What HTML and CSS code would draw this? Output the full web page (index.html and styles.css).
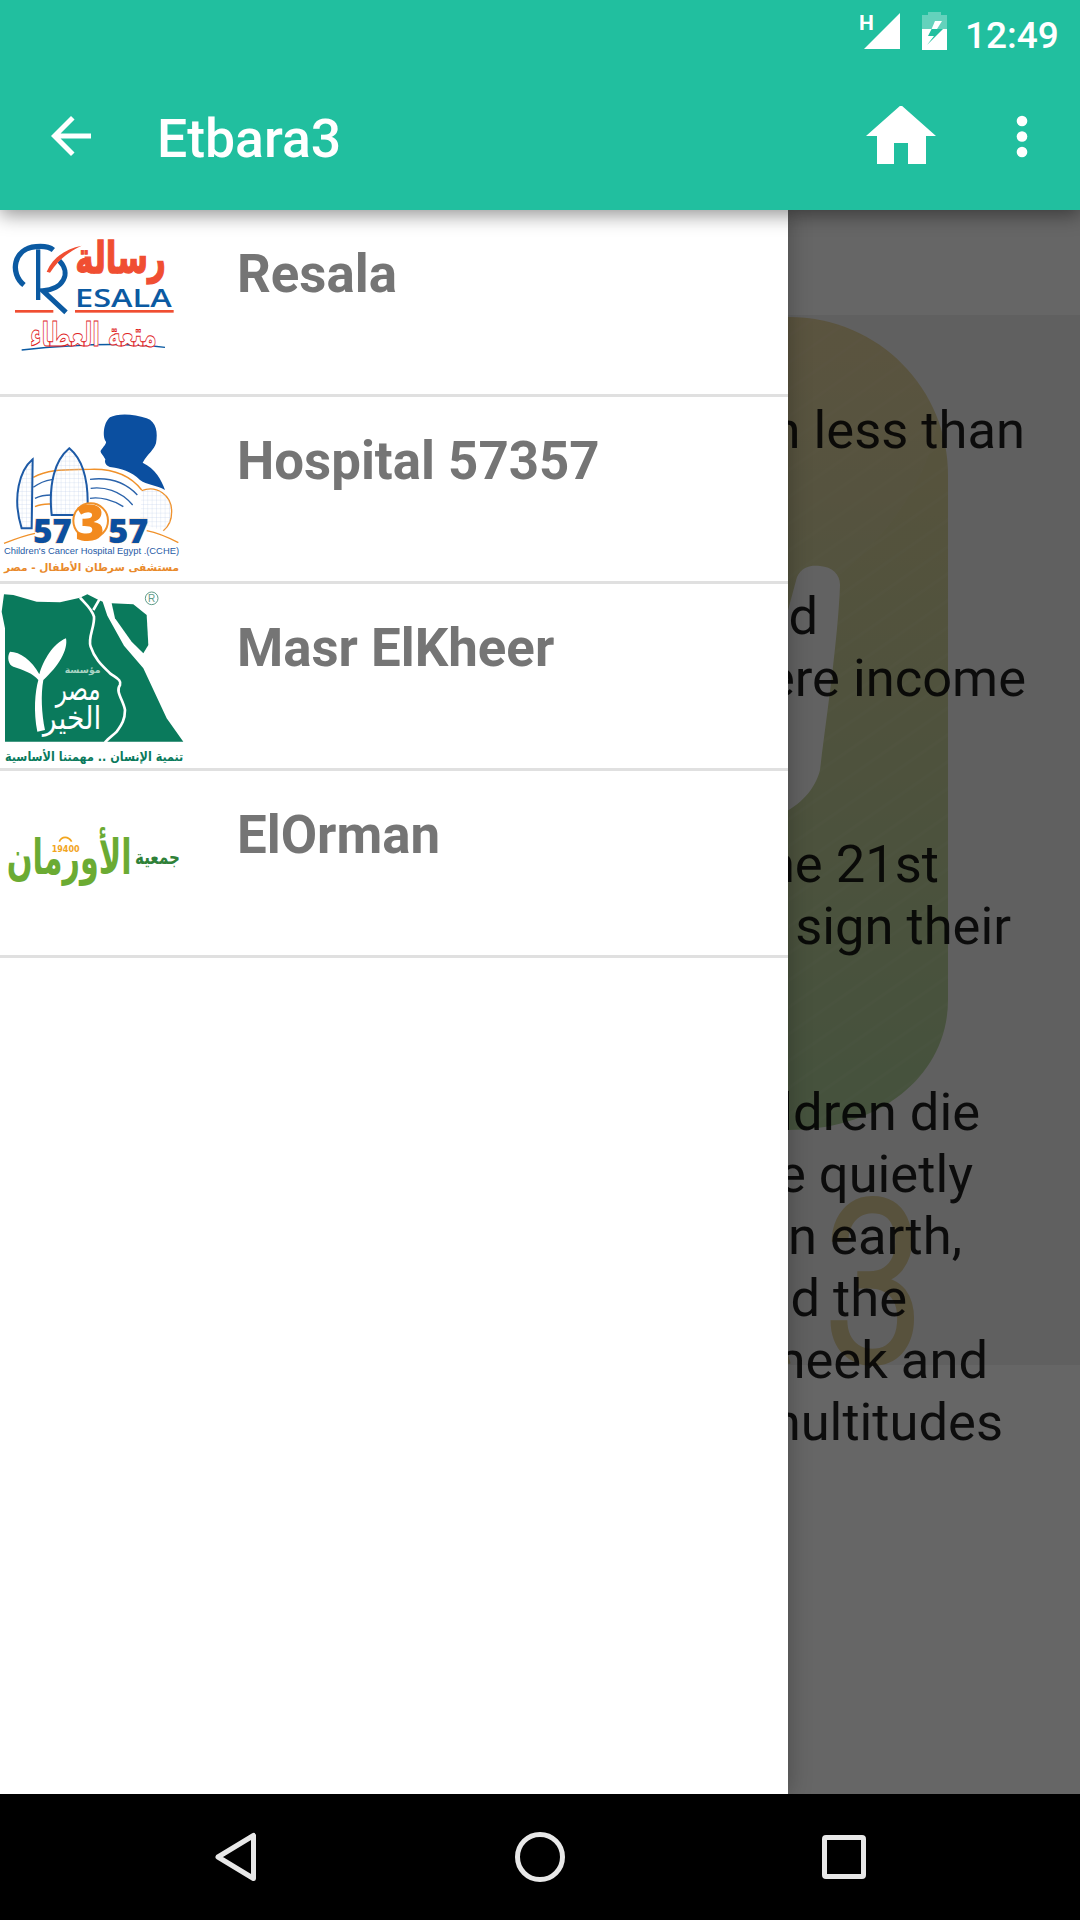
FILE: index.html
```html
<!DOCTYPE html>
<html lang="en">
<head>
<meta charset="utf-8">
<title>Etbara3</title>
<link rel="stylesheet" href="styles.css">
</head>
<body>
<div class="screen">
  <header class="appbar">
    <div class="statusbar">
      <svg class="status-icons" viewBox="860 0 90 72" width="90" height="72">
        <text class="net" x="859" y="30">H</text>
        <polygon class="w" points="864,49 900,13 900,49"/>
        <path class="w dim" d="M928 12h13v3h6v14h-25v-14h6z"/>
        <path class="w" d="M922 29h25v21h-25z"/>
        <polygon class="bolt" points="931.600,29 928,36 934,36 927,45 943,29"/>
        <polygon class="w" points="935,21 931.600,29 937,29 942,21"/>
      </svg>
      <span class="clock">12:49</span>
    </div>
    <div class="toolbar">
      <svg class="back" viewBox="0 0 24 24" width="60" height="60"><path class="w" d="M20 11H7.83l5.59-5.59L12 4l-8 8 8 8 1.41-1.41L7.83 13H20v-2z"/></svg>
      <h1 class="title">Etbara3</h1>
      <svg class="home" viewBox="866 106 70 60" width="70" height="60"><path class="w" d="M901 105L936 136H926V164H908V143H894V164H877V136H866Z"/></svg>
      <svg class="more" viewBox="1016 106 12 60" width="12" height="60"><circle class="w" cx="1022" cy="121" r="5.3"/><circle class="w" cx="1022" cy="136.500" r="5.300"/><circle class="w" cx="1022" cy="152" r="5.300"/></svg>
    </div>
  </header>

  <main class="main">
    <svg class="backdrop" viewBox="0 210 1080 1584" width="1080" height="1584">
      <defs>
        <linearGradient id="gold" x1="0" y1="0" x2="0" y2="1">
          <stop offset="0" stop-color="#e2d09a"/>
          <stop offset="0.45" stop-color="#c8ce98"/>
          <stop offset="1" stop-color="#acce98"/>
        </linearGradient>
        <pattern id="rays" width="22" height="22" patternUnits="userSpaceOnUse" patternTransform="rotate(-35)">
          <rect class="ray" width="22" height="3"/>
        </pattern>
      </defs>
      <rect class="photo" x="0" y="315" width="1080" height="1050"/>
      <path class="pill" d="M500 317H788C880 317 948 390 948 475V1000C948 1075 880 1130 788 1130H500Z"/>
      <path class="rays" d="M500 317H788C880 317 948 390 948 475V1000C948 1075 880 1130 788 1130H500Z"/>
      <path class="sheen" d="M788 317C860 317 925 370 938 420C925 500 860 570 788 610Z"/>
      <path class="notch" d="M797 577C802 566 812 565 820 566C832 567 840 574 840 585C838 640 826 720 820 770C815 790 800 805 780 815V640Z"/>
      <text class="mark" x="803" y="1364" text-anchor="end">a</text>
      <text class="mark" x="822" y="1364" textLength="104" lengthAdjust="spacingAndGlyphs">3</text>
    </svg>
    <div class="article">
      <div class="line e1024">population live on less than</div>
      <div class="line plain">$2.50 a day.</div>
      <div class="line plain">&nbsp;</div>
      <div class="line e818">More than 80% of the world</div>
      <div class="line e1026">lives in countries where income</div>
      <div class="line plain">differentials are widening.</div>
      <div class="line plain">&nbsp;</div>
      <div class="line e939">Nearly a billion entered the 21st</div>
      <div class="line e1010">unable to read a book or sign their</div>
      <div class="line plain">names.</div>
      <div class="line plain">&nbsp;</div>
      <div class="line e980">Every day 22,000 children die</div>
      <div class="line e973">due to poverty. They die quietly</div>
      <div class="line e961">in the poorest villages on earth,</div>
      <div class="line e907">far removed from scrutiny and the</div>
      <div class="line e987">the world. Being meek and</div>
      <div class="line e1000">in life makes these dying multitudes</div>
      <div class="line plain">even more invisible.</div>
    </div>
    <div class="scrim"></div>

    <nav class="drawer">
      <a class="row">
        <svg class="logo" viewBox="0 -60 570 552" width="190" height="184">
          <path class="s-blue" d="M72 165C28 130 40 55 108 50C130 48 150 52 160 60"/>
          <rect class="f-blue" x="108" y="58" width="13" height="152"/>
          <path class="s-blue thick" d="M178 92C215 130 190 178 128 182L198 247"/>
          <path class="f-red" d="M140 125C160 80 200 55 245 47C205 65 175 90 150 128Z"/>
          <text class="ar-bold f-red thicken" x="498" y="128" font-size="132" direction="rtl" textLength="272" lengthAdjust="spacingAndGlyphs">رسالة</text>
          <text class="latin f-blue" x="225" y="232" font-size="78" textLength="290" lengthAdjust="spacingAndGlyphs">ESALA</text>
          <rect class="f-red" x="45" y="240" width="115" height="8"/>
          <rect class="f-red" x="225" y="240" width="296" height="8"/>
          <path class="s-blue hair" d="M65 360C200 345 350 335 495 352"/>
          <text class="ar-outline" x="470" y="348" font-size="100" direction="rtl" textLength="380" lengthAdjust="spacingAndGlyphs">متعة العطاء</text>
        </svg>
        <span class="label">Resala</span>
      </a>
      <a class="row">
        <svg class="logo" viewBox="0 -9 570 552" width="190" height="184">
          <defs>
            <pattern id="grid" width="13" height="13" patternUnits="userSpaceOnUse"><path class="grid" d="M13 0H0V13"/></pattern>
          </defs>
          <path class="s-orange" d="M425 272C470 255 515 285 515 335C515 360 505 380 490 392"/>
          <path class="f-gridded" d="M425 272C470 255 515 285 515 335C515 360 505 380 490 392L420 370Z"/>
          <path class="f-hosp" d="M330 52C350 40 400 40 440 55C470 65 474 100 468 130C462 150 445 160 428 188C465 205 485 240 495 270C470 255 440 255 420 240C395 215 360 205 335 202C320 200 312 190 316 178C310 165 300 158 302 152C310 140 320 130 318 125C308 115 308 70 330 52Z"/>
          <path class="s-orange" d="M100 232C150 205 200 210 270 208C340 205 390 225 425 270"/>
          <path class="s-hblue" d="M100 262C130 240 150 240 160 238M270 238C320 232 370 240 412 285M105 295C125 285 145 285 155 285M272 265C310 260 360 270 398 315M270 295C300 290 340 300 370 320"/>
          <path class="s-orange" d="M105 320C125 310 145 312 155 312"/>
          <path class="sail" d="M98 178C60 210 35 290 65 385H95Z"/>
          <path class="sail" d="M208 145C165 180 145 250 155 345H262C268 250 250 180 208 145Z"/>
          <circle class="ring" cx="272" cy="362" r="52"/>
          <path class="s-orange" d="M12 430C50 415 80 405 105 400M440 392C480 400 510 415 535 428"/>
          <text class="num" x="100" y="428" font-size="100" textLength="115" lengthAdjust="spacingAndGlyphs">57</text>
          <text class="num3" x="226" y="422" font-size="150">3</text>
          <text class="num" x="325" y="428" font-size="100" textLength="120" lengthAdjust="spacingAndGlyphs">57</text>
          <text class="latin2 f-hblue" x="12" y="463" font-size="29" textLength="525" lengthAdjust="spacingAndGlyphs">Children's Cancer Hospital Egypt .(CCHE)</text>
          <text class="ar-bold f-orange" x="537" y="512" font-size="32" direction="rtl" textLength="525" lengthAdjust="spacingAndGlyphs">مستشفى سرطان الأطفال - مصر</text>
        </svg>
        <span class="label">Hospital 57357</span>
      </a>
      <a class="row">
        <svg class="logo" viewBox="0 -3 570 552" width="190" height="184">
          <path class="f-green" d="M12 28L40 30L110 50L180 52L240 38L262 28L290 42L308 50L322 92L372 182L430 250L500 400L550 470H15V130L5 80Z"/>
          <path class="f-green" d="M335 55L400 58L440 90L445 180L430 205L395 170L345 100Z"/>
          <path class="s-white" d="M240 38C255 55 275 70 282 95C285 125 262 160 272 185C285 225 310 245 330 265C350 280 365 285 360 300C345 320 370 345 375 375C375 410 360 425 350 440C340 450 325 460 315 472M300 40L280 75"/>
          <path class="f-white" d="M112 440C100 380 105 320 115 285C100 265 70 255 40 245C25 240 20 215 30 200C60 200 95 225 118 268C130 225 160 175 198 160C205 195 175 245 130 285C122 330 125 385 135 435Z"/>
          <text class="ar-bold f-mute" x="302" y="264" font-size="28" direction="rtl">مؤسسة</text>
          <text class="ar-thin f-white" x="302" y="345" font-size="96" direction="rtl" textLength="135" lengthAdjust="spacingAndGlyphs">مصر</text>
          <text class="ar-thin f-white" x="304" y="432" font-size="96" direction="rtl" textLength="175" lengthAdjust="spacingAndGlyphs">الخير</text>
          <circle class="ring-g" cx="455" cy="40" r="19"/>
          <text class="reg" x="455" y="51" font-size="30" text-anchor="middle">R</text>
          <text class="ar-bold f-green" x="550" y="528" font-size="38" direction="rtl" textLength="535" lengthAdjust="spacingAndGlyphs">تنمية الإنسان .. مهمتنا الأساسية</text>
        </svg>
        <span class="label">Masr ElKheer</span>
      </a>
      <a class="row">
        <svg class="logo" viewBox="0 573 570 552" width="190" height="184">
          <text class="ar-bold f-lime" x="395" y="882" font-size="146" direction="rtl" textLength="375" lengthAdjust="spacingAndGlyphs">الأورمان</text>
          <text class="ar-bold f-dgreen" x="540" y="852" font-size="60" direction="rtl" textLength="135" lengthAdjust="spacingAndGlyphs">جمعية</text>
          <text class="ar-bold f-amber" x="155" y="815" font-size="28" textLength="84" lengthAdjust="spacingAndGlyphs">19400</text>
          <path class="s-amber" d="M178 785C185 768 205 768 215 785"/>
        </svg>
        <span class="label">ElOrman</span>
      </a>
    </nav>
  </main>

  <footer class="navbar">
    <svg class="nav-icon" viewBox="215 1832 42 50" width="42" height="50"><path class="s-nav" d="M253.500 1835.500V1878.500L218 1857Z"/></svg>
    <svg class="nav-icon" viewBox="515 1832 50 50" width="50" height="50"><circle class="s-nav" cx="540" cy="1857" r="22.500"/></svg>
    <svg class="nav-icon" viewBox="822 1835 44 44" width="44" height="44"><rect class="s-nav" x="824.500" y="1837.500" width="39" height="39" rx="1.500"/></svg>
  </footer>
</div>
</body>
</html>
```
FILE: styles.css
```css
* { box-sizing: border-box; }
html, body { margin: 0; padding: 0; background: #000; }
.screen {
  width: 1080px; height: 1920px; display: flex; flex-direction: column;
  overflow: hidden; font-family: Roboto, "Noto Sans", sans-serif;
}
.w { fill: #fff; }
.dim { opacity: .3; }
.bolt { fill: #21bf9f; }

/* App bar */
.appbar {
  position: relative; z-index: 3; height: 210px; background: #21bf9f;
  box-shadow: 0 5px 18px rgba(0,0,0,.42);
}
.statusbar { height: 72px; display: flex; justify-content: flex-end; align-items: center; gap: 15px; padding-right: 23px; }
.status-icons { display: block; }
.net { font: 700 21px Roboto, sans-serif; fill: #fff; }
.clock { color: #fff; font-size: 37px; font-weight: 500; line-height: 72px; width: 92px; white-space: nowrap; }
.toolbar { height: 128px; display: flex; align-items: center; padding: 0 52px 0 41px; }
.back, .home, .more { display: block; flex: none; }
.title { margin: 5px 0 0 56px; flex: 1; color: #fff; font-size: 53.5px; font-weight: 500; line-height: 64px; }
.home { margin-right: 80px; }

/* Main */
.main { position: relative; flex: 1; background: #fff; overflow: hidden; }
.backdrop { position: absolute; left: 0; top: 0; display: block; }
.photo { fill: #f0f0f0; }
.pill { fill: url(#gold); }
.rays { fill: url(#rays); }
.ray { fill: #fff; opacity: .05; }
.sheen { fill: #fff; opacity: .04; }
.notch { fill: #f6f6f6; }
.mark { font: 400 232px Roboto, sans-serif; fill: #dccc98; }
.article { position: relative; padding-top: 189px; color: rgba(0,0,0,.87); font-size: 52.5px; line-height: 62px; }
.line { white-space: nowrap; text-align: right; }
.plain { text-align: left; padding-left: 48px; }
.e1024 { padding-right: 55px; }
.e818 { padding-right: 262px; }
.e1026 { padding-right: 54px; }
.e939 { padding-right: 141px; }
.e1010 { padding-right: 69px; }
.e980 { padding-right: 100px; }
.e973 { padding-right: 107px; }
.e961 { padding-right: 118px; }
.e907 { padding-right: 173px; }
.e987 { padding-right: 92px; }
.e1000 { padding-right: 77px; }
.scrim { position: absolute; inset: 0; background: rgba(0,0,0,.6); }

/* Drawer */
.drawer {
  position: absolute; left: 0; top: 0; bottom: 0; width: 788px; background: #fff;
  box-shadow: 0 0 22px rgba(0,0,0,.28);
}
.row { height: 187px; display: flex; align-items: flex-start; border-bottom: 3px solid #e0e0e0; }
.logo { display: block; flex: none; }
.label { margin: 32px 0 0 47px; color: #757575; font-size: 52.8px; font-weight: 700; line-height: 64px; }

/* Logo parts */
.s-blue { fill: none; stroke: #0b5aa2; stroke-width: 16; }
.s-blue.thick { stroke-width: 15; }
.s-blue.hair { stroke-width: 4; }
.f-blue { fill: #0b5aa2; }
.f-red { fill: #f04e32; }
.thicken { stroke: #f04e32; stroke-width: 4; }
.ar-bold { font-family: "DejaVu Sans", sans-serif; font-weight: 700; }
.ar-thin { font-family: "DejaVu Sans", sans-serif; font-weight: 400; }
.latin { font-family: "Open Sans", sans-serif; font-weight: 600; }
.latin2 { font-family: "Liberation Sans", sans-serif; }
.ar-outline { font-family: "DejaVu Sans", sans-serif; fill: #fff; stroke: #e0241f; stroke-width: 3; font-weight: 700; }
.f-hosp { fill: #0b4fa0; }
.f-hblue { fill: #1f5aa5; }
.f-orange { fill: #e98a2b; }
.s-orange { fill: none; stroke: #f0912a; stroke-width: 4; }
.s-hblue { fill: none; stroke: #2b63ab; stroke-width: 4; }
.grid { fill: none; stroke: #b9c8e4; stroke-width: 1.5; }
.f-gridded { fill: url(#grid); }
.sail { fill: url(#grid); stroke: #1d5aa6; stroke-width: 6; }
.ring { fill: #fff; stroke: #f0912a; stroke-width: 6; }
.num { font: 800 100px "Open Sans", sans-serif; fill: #0b4fa0; stroke: #f5b06a; stroke-width: 2; paint-order: stroke; }
.num3 { font: 800 150px "Open Sans", sans-serif; fill: #f28a1e; }
.f-green { fill: #0a7a5c; }
.f-white { fill: #fff; }
.s-white { fill: none; stroke: #fff; stroke-width: 8; }
.f-mute { fill: #a8d3c3; }
.ring-g { fill: none; stroke: #5f9c88; stroke-width: 3; }
.reg { font-family: "Liberation Sans", sans-serif; fill: #5f9c88; }
.f-lime { fill: #6bab33; }
.f-dgreen { fill: #2f8138; }
.f-amber { fill: #f2a51e; }
.s-amber { fill: none; stroke: #f2a51e; stroke-width: 5; }

/* Nav bar */
.navbar { height: 126px; background: #000; position: relative; z-index: 4; display: flex; align-items: center; padding-left: 215px; padding-bottom: 1px; }
.nav-icon { display: block; flex: none; }
.nav-icon:nth-child(2) { margin-left: 258px; }
.nav-icon:nth-child(3) { margin-left: 257px; }
.s-nav { fill: none; stroke: #e8e8e8; stroke-width: 5; stroke-linejoin: round; }
```
